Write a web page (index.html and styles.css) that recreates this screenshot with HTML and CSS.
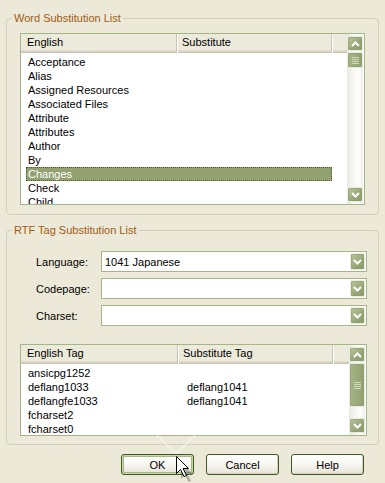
FILE: index.html
```html
<!DOCTYPE html>
<html>
<head>
<meta charset="utf-8">
<link rel="stylesheet" href="styles.css">
</head>
<body>
<div class="dialog">
  <fieldset class="group g1">
    <legend>Word Substitution List</legend>
    <div class="gbody">
      <div class="listview lv1">
        <div class="lv-main">
          <div class="lv-header">
            <div class="hcol c1">English</div>
            <div class="hcol c2">Substitute</div>
            <div class="hcol fill"></div>
          </div>
          <div class="lv-rows">
            <div class="row"><span class="cell c1">Acceptance</span></div>
            <div class="row"><span class="cell c1">Alias</span></div>
            <div class="row"><span class="cell c1">Assigned Resources</span></div>
            <div class="row"><span class="cell c1">Associated Files</span></div>
            <div class="row"><span class="cell c1">Attribute</span></div>
            <div class="row"><span class="cell c1">Attributes</span></div>
            <div class="row"><span class="cell c1">Author</span></div>
            <div class="row"><span class="cell c1">By</span></div>
            <div class="row sel"><span class="cell c1">Changes</span><span class="cell c2"></span></div>
            <div class="row"><span class="cell c1">Check</span></div>
            <div class="row"><span class="cell c1">Child</span></div>
          </div>
        </div>
        <div class="vscroll">
          <div class="sbtn"><svg width="9" height="6" viewBox="0 0 9 6"><path d="M1 5 L4.5 1.5 L8 5" stroke="#fff" stroke-width="2" fill="none"/></svg></div>
          <div class="track">
            <div class="thumb t1"><span class="grip"></span><span class="grip"></span><span class="grip"></span><span class="grip"></span></div>
          </div>
          <div class="sbtn"><svg width="9" height="6" viewBox="0 0 9 6"><path d="M1 1 L4.5 4.5 L8 1" stroke="#fff" stroke-width="2" fill="none"/></svg></div>
        </div>
      </div>
    </div>
  </fieldset>

  <fieldset class="group g2">
    <legend>RTF Tag Substitution List</legend>
    <div class="gbody">
      <div class="field">
        <label class="flabel">Language:</label>
        <div class="combo"><span class="cval">1041 Japanese</span><span class="dbtn"><svg width="9" height="6" viewBox="0 0 9 6"><path d="M1 1 L4.5 4.5 L8 1" stroke="#fff" stroke-width="2" fill="none"/></svg></span></div>
      </div>
      <div class="field">
        <label class="flabel">Codepage:</label>
        <div class="combo"><span class="cval"></span><span class="dbtn"><svg width="9" height="6" viewBox="0 0 9 6"><path d="M1 1 L4.5 4.5 L8 1" stroke="#fff" stroke-width="2" fill="none"/></svg></span></div>
      </div>
      <div class="field">
        <label class="flabel">Charset:</label>
        <div class="combo"><span class="cval"></span><span class="dbtn"><svg width="9" height="6" viewBox="0 0 9 6"><path d="M1 1 L4.5 4.5 L8 1" stroke="#fff" stroke-width="2" fill="none"/></svg></span></div>
      </div>

      <div class="listview lv2">
        <div class="lv-main">
          <div class="lv-header">
            <div class="hcol c1">English Tag</div>
            <div class="hcol c2">Substitute Tag</div>
            <div class="hcol fill"></div>
          </div>
          <div class="lv-rows">
            <div class="row"><span class="cell c1">ansicpg1252</span><span class="cell c2"></span></div>
            <div class="row"><span class="cell c1">deflang1033</span><span class="cell c2">deflang1041</span></div>
            <div class="row"><span class="cell c1">deflangfe1033</span><span class="cell c2">deflang1041</span></div>
            <div class="row"><span class="cell c1">fcharset2</span><span class="cell c2"></span></div>
            <div class="row"><span class="cell c1">fcharset0</span><span class="cell c2"></span></div>
          </div>
        </div>
        <div class="vscroll">
          <div class="sbtn"><svg width="9" height="6" viewBox="0 0 9 6"><path d="M1 5 L4.5 1.5 L8 5" stroke="#fff" stroke-width="2" fill="none"/></svg></div>
          <div class="track">
            <div class="thumb t2"><span class="grip"></span><span class="grip"></span><span class="grip"></span><span class="grip"></span></div>
          </div>
          <div class="sbtn"><svg width="9" height="6" viewBox="0 0 9 6"><path d="M1 1 L4.5 4.5 L8 1" stroke="#fff" stroke-width="2" fill="none"/></svg></div>
        </div>
      </div>
    </div>
  </fieldset>

  <div class="buttons">
    <button class="btn default">OK</button>
    <button class="btn">Cancel</button>
    <button class="btn">Help</button>
  </div>

  <svg class="sparkle" width="60" height="40" viewBox="0 0 60 40">
    <path d="M6 2 L26 22 M46 2 L26 22" stroke="#ffffff" stroke-width="1" opacity="0.85" fill="none"/>
  </svg>
  <svg class="cursor" width="20" height="28" viewBox="0 0 20 28">
    <path d="M3 3 L3 20 L7 16 L10.5 23 L13 22 L9.5 15 L15 15 Z" fill="#000" opacity="0.25" transform="translate(2,3)"/>
    <path d="M0.5 0.5 L0.5 17.5 L4.5 13.5 L8 20.5 L10.5 19.5 L7 12.5 L12.5 12.5 Z" fill="#fff" stroke="#000" stroke-width="1" stroke-linejoin="miter"/>
  </svg>
</div>
</body>
</html>
```

FILE: styles.css
```css
html, body {
  margin: 0;
  padding: 0;
  background: #ECE9D8;
}
body {
  font-family: "Liberation Sans", Arial, sans-serif;
  font-size: 11px;
  color: #000;
}
.dialog {
  position: relative;
  width: 385px;
  height: 483px;
  padding: 0 6px;
  box-sizing: border-box;
  overflow: hidden;
}
.group {
  margin: 0;
  padding: 0;
  border: 1px solid #D0D0BF;
  border-radius: 4px;
  min-width: 0;
}
.group legend {
  margin-left: 5px;
  padding: 0 2px;
  line-height: 14px;
  height: 14px;
  color: #A15B12;
  font-size: 11px;
}
.g1 { margin-top: 11px; }
.g2 { margin-top: 8px; }
.g1 .gbody { padding: 8px 0 9px 13px; }
.g2 .gbody { padding: 14px 0 8px 13px; }

/* list view */
.listview {
  display: flex;
  border: 1px solid #A4B588;
  background: #fff;
  box-sizing: border-box;
  overflow: hidden;
}
.lv1 { width: 345px; height: 172px; }
.lv2 { width: 347px; height: 92px; margin-top: 18px; }
.lv-main {
  flex: 1;
  display: flex;
  flex-direction: column;
  min-width: 0;
}
.lv-header {
  display: flex;
  height: 19px;
  background: #EBEADB;
  box-shadow: inset 0 -1px #CBC7B8, inset 0 -2px #D6D2C2, inset 0 -3px #E2DECD;
}
.hcol {
  height: 19px;
  line-height: 17px;
  padding-left: 6px;
  box-sizing: border-box;
  white-space: nowrap;
  border-right: 1px solid #C7C5B2;
  box-shadow: inset 1px 0 #fff;
}
.hcol.c1 { width: 156px; box-shadow: none; }
.hcol.c2 { width: 155px; padding-left: 5px; }
.lv2 .hcol.c1 { width: 157px; }
.hcol.fill { flex: 1; border-right: none; }
.lv-rows {
  padding-top: 2px;
  overflow: hidden;
  flex: 1;
}
.row {
  display: flex;
  height: 14px;
  line-height: 14px;
  margin-left: 5px;
  width: 306px;
  box-sizing: border-box;
  white-space: nowrap;
}
.row .cell.c1 { width: 151px; padding-left: 2px; }
.lv2 .row .cell.c1 { width: 152px; padding-left: 2px; }
.row .cell.c2 { padding-left: 7px; }
.row.sel {
  background: #93A070;
  color: #fff;
  outline: 1px dotted #4F5A35;
  outline-offset: -1px;
}

/* scrollbar */
.vscroll {
  width: 16px;
  margin-right: 1px;
  padding: 2px 0;
  display: flex;
  flex-direction: column;
  gap: 1px;
  background: linear-gradient(to right, #EAE8DD, #F6F5F0 35%, #FDFDFB 70%, #F1F0EA);
}
.sbtn, .dbtn {
  display: flex;
  align-items: center;
  justify-content: center;
  box-sizing: border-box;
  border: 1px solid #E9EDDF;
  border-radius: 2px;
  background: linear-gradient(135deg, #B9C59C, #98A677 60%, #8C9A6A);
  box-shadow: inset 0 0 0 1px rgba(140, 155, 105, 0.5);
}
.sbtn { height: 15px; width: 16px; flex: none; }
.track { flex: 1; }
.thumb {
  width: 16px;
  box-sizing: border-box;
  border: 1px solid #E9EDDF;
  border-radius: 2px;
  background: linear-gradient(to right, #A7B487, #9DAB7C 50%, #93A171);
  box-shadow: inset 0 0 0 1px rgba(140, 155, 105, 0.5);
  display: flex;
  flex-direction: column;
  align-items: center;
  justify-content: center;
  gap: 1px;
}
.t1 { height: 16px; }
.t2 { height: 44px; }
.grip {
  display: block;
  width: 7px;
  height: 1px;
  background: #D4DCC0;
}

/* combos */
.field {
  display: flex;
  align-items: center;
  height: 21px;
  margin-bottom: 6px;
}
.field:nth-child(3) { margin-bottom: 0; }
.flabel {
  width: 65px;
  margin-left: 16px;
  line-height: 14px;
}
.combo {
  width: 266px;
  height: 21px;
  box-sizing: border-box;
  border: 1px solid #A4B588;
  background: #fff;
  display: flex;
  align-items: center;
}
.cval {
  flex: 1;
  padding-left: 3px;
  line-height: 14px;
  white-space: nowrap;
}
.dbtn {
  width: 15px;
  height: 17px;
  margin-right: 1px;
}

/* buttons */
.buttons {
  display: flex;
  justify-content: flex-end;
  gap: 12px;
  margin-top: 9px;
  padding-right: 15px;
}
.btn {
  width: 73px;
  height: 21px;
  padding: 0;
  font-family: "Liberation Sans", Arial, sans-serif;
  font-size: 11px;
  color: #000;
  border: 1px solid #3A5A26;
  border-radius: 3px;
  background: linear-gradient(#FFFFFF, #F6F5EF 55%, #E6E3D6);
  box-shadow: inset -1px -1px #D6D0BC;
}
.btn.default {
  box-shadow: inset 0 0 0 1px #CBD6AE, inset 0 0 0 2px #A8B885;
}

/* overlays: pointer and reflection */
.sparkle {
  position: absolute;
  left: 150px;
  top: 432px;
}
.cursor {
  position: absolute;
  left: 176px;
  top: 456px;
}
```
